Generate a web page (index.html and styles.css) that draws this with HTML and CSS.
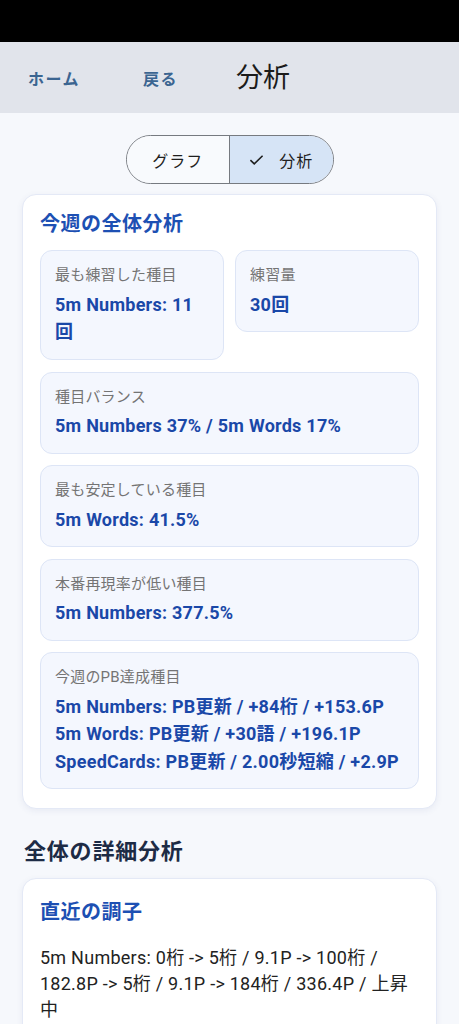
FILE: index.html
```html
<!DOCTYPE html>
<html lang="ja">
<head>
<meta charset="utf-8">
<title>分析</title>
<link rel="stylesheet" href="styles.css">
</head>
<body>
<div class="statusbar"></div>
<header class="appbar">
  <a class="nav">ホーム</a>
  <a class="nav back">戻る</a>
  <h1 class="title">分析</h1>
</header>
<main class="content">
  <div class="seg">
    <div class="seg-item">グラフ</div>
    <div class="seg-item active">
      <svg class="check" viewBox="0 0 16 12" width="15" height="12"><path d="M1.5 6.2 L5.6 10.2 L14.5 1.5" fill="none" stroke="#1f1f1f" stroke-width="1.7"/></svg>
      <span>分析</span>
    </div>
  </div>

  <section class="card">
    <h2 class="card-title">今週の全体分析</h2>
    <div class="grid2">
      <div class="box">
        <div class="label">最も練習した種目</div>
        <div class="value">5m Numbers: 11<br>回</div>
      </div>
      <div class="box">
        <div class="label">練習量</div>
        <div class="value">30回</div>
      </div>
    </div>
    <div class="box">
      <div class="label">種目バランス</div>
      <div class="value">5m Numbers 37% / 5m Words 17%</div>
    </div>
    <div class="box">
      <div class="label">最も安定している種目</div>
      <div class="value">5m Words: 41.5%</div>
    </div>
    <div class="box">
      <div class="label">本番再現率が低い種目</div>
      <div class="value">5m Numbers: 377.5%</div>
    </div>
    <div class="box">
      <div class="label">今週のPB達成種目</div>
      <div class="value">5m Numbers: PB更新 / +84桁 / +153.6P<br>5m Words: PB更新 / +30語 / +196.1P<br>SpeedCards: PB更新 / 2.00秒短縮 / +2.9P</div>
    </div>
  </section>

  <h2 class="section-title">全体の詳細分析</h2>

  <section class="card card-detail">
    <h2 class="card-title">直近の調子</h2>
    <p class="body-text">5m Numbers: 0桁 -&gt; 5桁 / 9.1P -&gt; 100桁 / 182.8P -&gt; 5桁 / 9.1P -&gt; 184桁 / 336.4P / 上昇中</p>
  </section>
</main>
</body>
</html>
```

FILE: styles.css
```css
html, body {
  margin: 0;
  padding: 0;
}
body {
  background: #f6f8fc;
  font-family: Roboto, "Noto Sans CJK JP", sans-serif;
  color: #1f1f1f;
}
.statusbar {
  height: 42px;
  background: #000;
}
.appbar {
  height: 71px;
  background: #e1e4eb;
  display: flex;
  align-items: center;
  padding-left: 28px;
}
.nav {
  font-size: 16px;
  font-weight: 700;
  letter-spacing: 1.5px;
  color: #3b6591;
}
.back {
  margin-left: 63px;
}
.title {
  margin: 0 0 0 58px;
  font-size: 27px;
  font-weight: 400;
  color: #1b1b1b;
  line-height: 32px;
}
.content {
  padding: 22px 22px 20px;
}
.seg {
  width: 208px;
  height: 49px;
  margin: 0 auto;
  box-sizing: border-box;
  border: 1.3px solid #767a80;
  border-radius: 25px;
  display: flex;
  overflow: hidden;
}
.seg-item {
  flex: 1;
  display: flex;
  align-items: center;
  justify-content: center;
  font-size: 16px;
  letter-spacing: 1px;
  color: #1f1f1f;
  background: #f8fafd;
}
.seg-item.active {
  background: #d6e4f6;
  border-left: 1.3px solid #767a80;
  gap: 15px;
}
.check {
  display: block;
}
.card {
  margin-top: 10px;
  background: #fff;
  border: 1px solid #e4e9f6;
  border-radius: 14px;
  padding: 15px 17px 19px;
  box-shadow: 0 2px 6px rgba(60, 80, 140, 0.08);
}
.card-title {
  margin: 0 0 12px;
  font-size: 20px;
  line-height: 28px;
  font-weight: 700;
  color: #1d50b3;
  letter-spacing: 0.5px;
}
.grid2 {
  display: grid;
  grid-template-columns: 1fr 1fr;
  gap: 11px;
  align-items: start;
  margin-bottom: 12px;
}
.box {
  background: #f4f7fe;
  border: 1px solid #dde5f6;
  border-radius: 12px;
  padding: 13px 14px 13px;
  margin-bottom: 11.5px;
}
.grid2 .box {
  margin-bottom: 0;
}
.card > .box:last-child {
  margin-bottom: 0;
}
.label {
  font-size: 15px;
  line-height: 22px;
  color: #747474;
  letter-spacing: 0.2px;
}
.value {
  margin-top: 4.5px;
  font-size: 18px;
  line-height: 27.5px;
  font-weight: 700;
  color: #1a48a8;
  letter-spacing: 0.25px;
}
.section-title {
  margin: 27px 0 10px 2px;
  font-size: 22px;
  line-height: 32px;
  font-weight: 700;
  color: #1d2b45;
  letter-spacing: 0.8px;
}
.card-detail {
  padding-top: 19px;
}
.body-text {
  margin: 19px 0 0;
  font-size: 18px;
  line-height: 26px;
  color: #222;
  letter-spacing: 0.25px;
}
```
